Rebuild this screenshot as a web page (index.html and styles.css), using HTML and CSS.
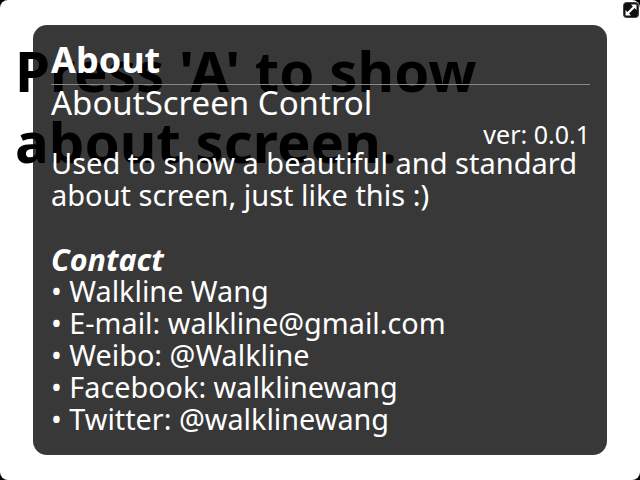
FILE: index.html
```html
<!DOCTYPE html>
<html lang="en">
<head>
  <meta charset="UTF-8">
  <title>AboutScreen Control</title>
  <link rel="stylesheet" href="styles.css">
</head>
<body>
  <div id="stage">
    <h1 class="hint">Press 'A' to show about screen.</h1>
    <button class="fullscreen" type="button" aria-label="Fullscreen">
      <svg width="16" height="16" viewBox="0 0 16 16">
        <rect x="0.500" y="0.500" width="15" height="15" rx="3" fill="#111" stroke="#444"/>
        <path d="M8 2.500h5.500V8l-1.900-1.900-5.500 5.500L8 13.500H2.500V8l1.900 1.900 5.500-5.500z" fill="#fff"/>
      </svg>
    </button>
    <div class="about">
      <h2 class="about-title">About</h2>
      <div class="about-name">AboutScreen Control</div>
      <div class="about-ver">ver: 0.0.1</div>
      <p class="about-desc">Used to show a beautiful and standard about screen, just like this :)</p>
      <h3 class="about-contact">Contact</h3>
      <ul class="about-list">
        <li>• Walkline Wang</li>
        <li>• E-mail: walkline@gmail.com</li>
        <li>• Weibo: @Walkline</li>
        <li>• Facebook: walklinewang</li>
        <li>• Twitter: @walklinewang</li>
      </ul>
    </div>
  </div>
</body>
</html>
```

FILE: styles.css
```css
html, body {
  margin: 0;
  padding: 0;
  height: 100%;
  background: #000;
}
#stage {
  position: relative;
  width: 640px;
  height: 480px;
  overflow: hidden;
  background: #fff;
  border-radius: 8px;
  font-family: "Noto Sans", "Open Sans", sans-serif;
}
.hint {
  margin: 0;
  padding: 35px 0 0 15px;
  width: 500px;
  font-size: 56.400px;
  line-height: 71px;
  font-weight: 700;
  color: #000;
}
.fullscreen {
  position: absolute;
  top: 2px;
  right: 1px;
  width: 16px;
  height: 16px;
  padding: 0;
  border: 0;
  background: none;
}
.fullscreen svg {
  display: block;
}
.about {
  position: absolute;
  left: 33px;
  top: 25px;
  box-sizing: border-box;
  width: 574px;
  height: 430px;
  padding: 13px 17px 0 18px;
  border-radius: 14px;
  background: rgba(0, 0, 0, 0.78);
  color: #fff;
  font-size: 33px;
}
.about-title {
  margin: 0;
  padding-bottom: 2px;
  font-size: 36px;
  line-height: 44px;
  font-weight: 700;
  border-bottom: 1px solid #888;
}
.about-name {
  line-height: 36px;
}
.about-ver {
  font-size: 25px;
  line-height: 26px;
  text-align: right;
}
.about-desc {
  margin: 0;
  font-size: 29px;
  line-height: 32px;
}
.about-contact {
  margin: 32px 0 0;
  font-size: 30.500px;
  line-height: 32px;
  font-style: italic;
  font-weight: 700;
}
.about-list {
  margin: 0;
  padding: 0;
  list-style: none;
  font-size: 28.800px;
  line-height: 32px;
}
```
